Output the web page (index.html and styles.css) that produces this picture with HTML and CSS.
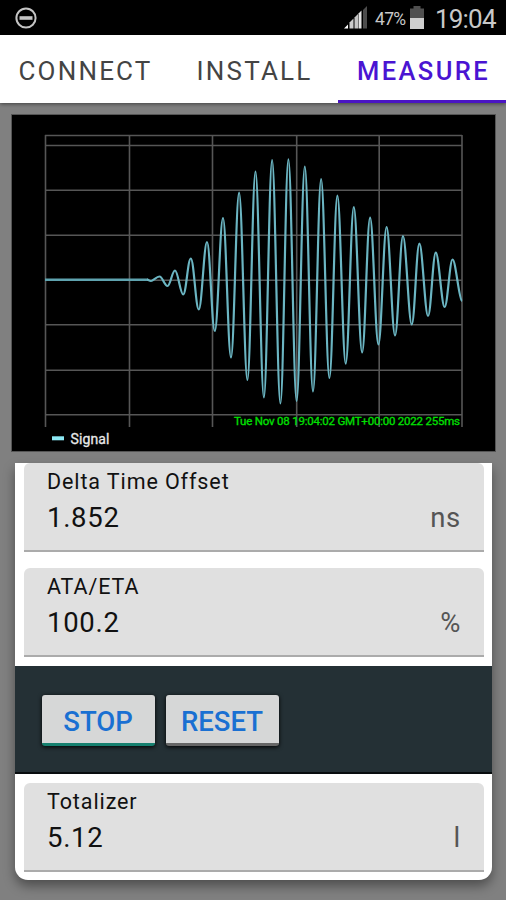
FILE: index.html
```html
<!DOCTYPE html>
<html lang="en">
<head>
    <meta charset="UTF-8">
    <meta name="viewport" content="width=device-width, initial-scale=1.0">
    <title>Measure</title>
    <link rel="stylesheet" href="styles.css">
</head>
<body>
    <!-- Status bar -->
    <header class="status-bar">
        <svg class="dnd" width="22" height="22" viewBox="0 0 22 22">
            <circle cx="11" cy="11" r="9.6" fill="none" stroke="#c4c4c4" stroke-width="2"/>
            <rect x="4.5" y="9.2" width="13" height="3.6" fill="#c4c4c4"/>
        </svg>
        <div class="status-right">
            <svg width="24" height="23" viewBox="0 0 24 23">
                <path d="M0 22.5l4-4v4z" fill="#fff"/>
                <path d="M5.5 22.5v-6l4-4v10z" fill="#ccc"/>
                <path d="M10.5 22.5v-11l3.5-3.5v14.5z" fill="#c4c4c4"/>
                <path d="M14.5 22.5V7.5l3-3v18z" fill="#e4e4e4"/>
                <path d="M19 22.5V4l4-4v22.5z" fill="#4c4c4c"/>
            </svg>
            <span class="percent">47%</span>
            <svg class="battery" width="14" height="23" viewBox="0 0 14 23">
                <path d="M0 2.5h3.5V0h7v2.5H14V12H0z" fill="#505050"/>
                <rect y="12" width="14" height="11" fill="#cfcfcf"/>
            </svg>
            <span class="clock">19:04</span>
        </div>
    </header>

    <!-- Tabs -->
    <nav class="tabs">
        <a class="tab">CONNECT</a>
        <a class="tab">INSTALL</a>
        <a class="tab active">MEASURE</a>
    </nav>

    <main>
        <!-- Signal chart -->
        <section class="chart">
            <svg width="483" height="337" viewBox="12 115 483 337">
                <path class="grid" d="M45.5 135V427M129.5 135V427M212.5 135V427M296.7 135V427M379.2 135V427M462 135V427
                    M45 135.5H462M45 145.5H462M45 190.2H462M45 235.2H462M45 280.2H462M45 324.8H462M45 370.3H462M45 414.8H462"/>
                <path class="baseline" d="M45 279.7H148"/>
                <path class="signal" d="M147 279.7C149 279.7 149 281 151 281
                    S156.5 276.5 159.5 276.5 S164.5 286 167.5 286
                    S172 270.5 175 270.5 S180.2 294.5 183.2 294.5
                    S187.8 258.5 190.8 258.5 S195.8 309.5 198.8 309.5
                    S204 242 207 242 S211.8 331 214.8 331
                    S220 218 223 218 S228 357.5 231 357.5
                    S236.1 192.5 239.1 192.5 S244.4 380 247.4 380
                    S252.5 171.5 255.5 171.5 S260.9 397.5 263.9 397.5
                    S269.1 160 272.1 160 S277.4 403.5 280.4 403.5
                    S285.4 159.3 288.4 159.3 S293.6 401 296.6 401
                    S301.8 166.5 304.8 166.5 S310 391.5 313 391.5
                    S318.1 179 321.1 179 S326.4 378 329.4 378
                    S334.4 195.7 337.4 195.7 S342.7 363.7 345.7 363.7
                    S350.8 207 353.8 207 S359.1 352.5 362.1 352.5
                    S367.1 217.7 370.1 217.7 S375.4 344.5 378.4 344.5
                    S383.6 227 386.6 227 S392 335.5 395 335.5
                    S400 236 403 236 S408.7 324.5 411.7 324.5
                    S416.4 243.7 419.4 243.7 S425 316 428 316
                    S432.8 252.7 435.8 252.7 S441.6 307 444.6 307
                    S449.6 259.5 452.6 259.5 S459 300 462 301"/>
                <rect x="52" y="436.3" width="12" height="4" fill="#8ce8f4"/>
                <text class="legend" x="70.5" y="443.5" textLength="39">Signal</text>
                <text class="timestamp" x="234" y="425" textLength="226">Tue Nov 08 19:04:02 GMT+00:00 2022 255ms</text>
            </svg>
        </section>

        <!-- Readings -->
        <section class="card">
            <div class="field first">
                <div class="label">Delta Time Offset</div>
                <div class="row"><span class="value">1.852</span><span class="unit">ns</span></div>
            </div>
            <div class="field">
                <div class="label">ATA/ETA</div>
                <div class="row"><span class="value">100.2</span><span class="unit">%</span></div>
            </div>
            <div class="actions">
                <button class="stop">STOP</button>
                <button>RESET</button>
            </div>
            <div class="field last">
                <div class="label">Totalizer</div>
                <div class="row"><span class="value">5.12</span><span class="unit">l</span></div>
            </div>
        </section>
    </main>
</body>
</html>
```
FILE: styles.css
```css
* {
    box-sizing: border-box;
}
body {
    margin: 0;
    height: 900px;
    overflow: hidden;
    background: #808080;
    font-family: Roboto, sans-serif;
}
.status-bar {
    display: flex;
    justify-content: space-between;
    height: 35px;
    padding: 0 10px 0 15px;
    background: #000;
}
.dnd {
    margin-top: 7px;
}
.status-right {
    display: flex;
    align-items: flex-start;
    padding-top: 6px;
    color: #c8c8c8;
}
.percent {
    width: 33px;
    margin-left: 7px;
    font-size: 17.5px;
    line-height: 26px;
    letter-spacing: -0.7px;
}
.battery {
    margin-left: 2px;
}
.clock {
    margin-left: 11px;
    width: 61px;
    font-size: 26px;
    line-height: 27px;
    letter-spacing: -0.8px;
}
.tabs {
    display: grid;
    grid-template-columns: 169px 169px 168px;
    height: 68px;
    background: #fff;
    box-shadow: 0 1px 4px rgba(0, 0, 0, 0.5);
}
.tab {
    height: 68px;
    padding-left: 2px;
    border-bottom: 3px solid transparent;
    text-align: center;
    font-size: 26px;
    line-height: 72px;
    letter-spacing: 2.2px;
    color: #444;
}
.tab.active {
    padding-left: 3px;
    border-color: #4a14c4;
    font-size: 25.5px;
    font-weight: 500;
    letter-spacing: 2.4px;
    color: #4a14d2;
}
main {
    padding: 12px 11px 0 12px;
}
.chart {
    height: 336px;
    background: #000;
    outline: 1px solid #555;
}
.chart svg {
    display: block;
}
.grid {
    fill: none;
    stroke: #565656;
    stroke-width: 1.6;
}
.baseline {
    stroke: #5fa3af;
    stroke-width: 2.6;
}
.signal {
    fill: none;
    stroke: #6bb5c2;
    stroke-width: 2.2;
    stroke-linejoin: round;
}
.legend {
    font-size: 14px;
    fill: #e8e8e8;
    stroke: #e8e8e8;
    stroke-width: 0.3;
}
.timestamp {
    font-size: 11.5px;
    fill: #00e000;
    stroke: #00e000;
    stroke-width: 0.3;
}
.card {
    width: 477px;
    height: 417px;
    margin: 12px 0 0 3px;
    background: #fff;
    border-radius: 0 0 13px 13px;
    box-shadow: 0 6px 12px rgba(0, 0, 0, 0.4);
}
.field {
    height: 89px;
    margin: 16px 8px 0 9px;
    padding: 6px 23px 0;
    background: #e0e0e0;
    border-bottom: 2px solid #ababab;
    border-radius: 6px 6px 0 0;
}
.field.first {
    margin-top: 0;
}
.field.last {
    margin-top: 9px;
}
.label {
    font-size: 21.5px;
    line-height: 26px;
    letter-spacing: 0.9px;
    color: #111;
}
.row {
    display: flex;
    justify-content: space-between;
    font-size: 27.5px;
    line-height: 45px;
    letter-spacing: 0.7px;
    color: #111;
}
.unit {
    color: #555;
}
.actions {
    display: flex;
    gap: 11px;
    height: 108px;
    margin-top: 9px;
    padding: 29px 27px 0;
    background: #243035;
    border-bottom: 2px solid #080c0e;
}
button {
    width: 113px;
    height: 51px;
    padding: 4px 1px 0 0;
    border: 0;
    border-bottom: 3px solid #666;
    border-radius: 3px;
    background: #d6d7d7;
    box-shadow: 0 1px 4px #000;
    font-family: Roboto, sans-serif;
    font-size: 27.5px;
    font-weight: 500;
    color: #1a70d2;
}
button.stop {
    border-color: #16806f;
}
```
